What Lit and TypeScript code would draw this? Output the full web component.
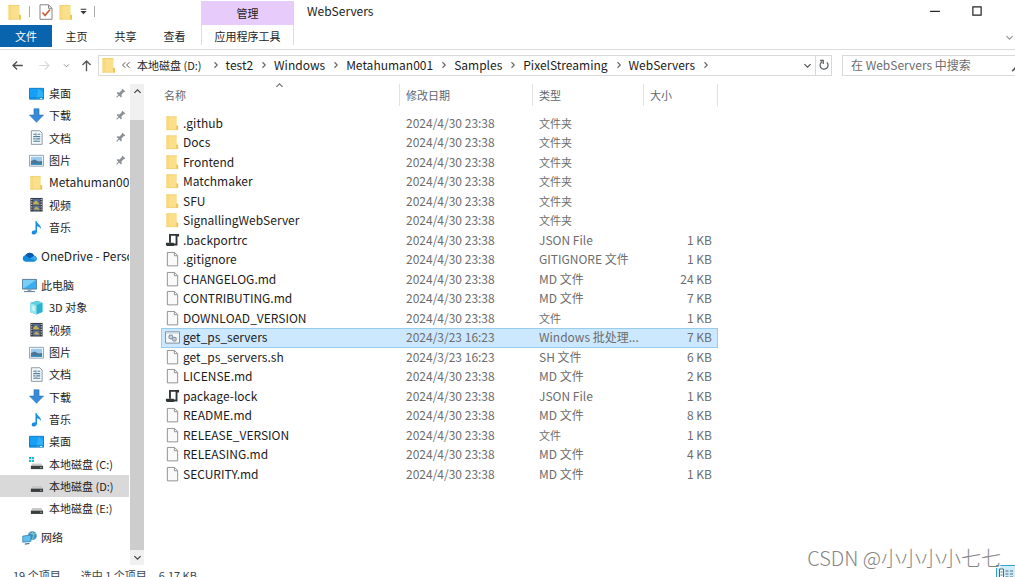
import { LitElement, html, css, svg, nothing, TemplateResult } from "lit";
import { customElement, property, state } from "lit/decorators.js";
import { classMap } from "lit/directives/class-map.js";

const icons: Record<string, TemplateResult> = {
  folder: svg`<path d="M1.500 1h11v9.500l1.500.8V15.500h-12.500z" fill="#fbe08c"/><path d="M1.500 1h3v14.500h-3z" fill="#f7da80"/><path d="M12 10.500l2 .8v4.200h-2z" fill="#e9c65c"/><path d="M1.500 1.500h11M1.500 15.100h12.500" stroke="#edcb6b" stroke-width=".7"/>`,
  file: svg`<path d="M2.500 1h7.700l3.300 3.300V15.300h-11z" fill="#fafafa" stroke="#8d8d8d"/><path d="M10 1.200v3.300h3.300" fill="none" stroke="#8d8d8d"/>`,
  json: svg`<path d="M5.300 11V2.500h9.200M12.300 2.500v10.300H2.500" fill="none" stroke="#2f3437" stroke-width="2"/><path d="M1 11h8.500v3.300H2.500Q1 14.300 1 12.500z" fill="#2f3437"/><path d="M13 1.500h2v2.800h-2z" fill="#2f3437"/>`,
  batch: svg`<path d="M.5 2.500h15v12H.5z" fill="#f4f8fb" stroke="#7d8b98"/><path d="M1 3h14v1.500H1z" fill="#cbd8e2"/><circle cx="6.200" cy="8" r="2" fill="none" stroke="#8795a1" stroke-width="1.300"/><circle cx="10" cy="10.500" r="2" fill="none" stroke="#8795a1" stroke-width="1.300"/><path d="M6.200 5.300v5.400M3.500 8h5.400M10 7.800v5.400M7.300 10.500h5.400" stroke="#a6b2bc" stroke-width=".6"/>`,
  desktop: svg`<path d="M.5 2.500h15v11.500H.5z" fill="#16a0f5" stroke="#0d78be"/><path d="M10 3l5 4v6.500H8z" fill="#2fb0fb"/><path d="M1 12.500h14" stroke="#0b84d4"/><path d="M12 13.300h2" stroke="#fff"/>`,
  download: svg`<path d="M5.300.8h5.400v6.700h4.800L8 15.300.5 7.500h4.800z" fill="#368ad8" stroke="#286fb4" stroke-width=".6"/>`,
  document: svg`<path d="M2.500.8h9l2.500 2.500v12H2.500z" fill="#f7fafc" stroke="#8594a0"/><path d="M4.500 4.500h3M9 4.500h3M4.500 7h7.500M4.500 9.500h2M8 9.500h4M4.500 12h7.500" stroke="#527b99" stroke-width="1.200"/><path d="M7.500 3v4M7.500 8.500v4" stroke="#6fa2c2"/>`,
  picture: svg`<path d="M.5 2.500h15v11.500H.5z" fill="#fff" stroke="#8ba0b2"/><path d="M2 4h12v8.500H2z" fill="#9acaed"/><path d="M2 8.500l4-1.500 4 2 4-.5v4H2z" fill="#4e7694"/><path d="M2 11h12v1.500H2z" fill="#2e8cc2"/>`,
  video: svg`<path d="M1.500 1h13v14.500h-13z" fill="#343a42"/><path d="M4.500 2h7v6h-7z" fill="#4e6d9a"/><path d="M4.500 9h7v5.500h-7z" fill="#5873a1"/><path d="M4.500 6l3-2.500L11.500 8h-7zM5 13l3-3 3.500 3.500z" fill="#c5ae57"/><path d="M3 2v13M13 2v13" stroke="#e3e3df" stroke-width="1.200" stroke-dasharray="1.300 1.300"/>`,
  music: svg`<path d="M8 1c.4 3 5.200 3.800 4.700 8.500C11.500 7.500 10 6.800 8.600 6.600V12c0 2-1.500 3.500-3.300 3.500S2.500 14.300 3 13c.5-1.500 2.300-2.300 3.900-1.800V1z" fill="#198fe3"/>`,
  cloud: svg`<path d="M4 13.500a3.500 3.500 0 0 1-.5-6.900A5.300 5.300 0 0 1 13 7.200a3.200 3.200 0 0 1 0 6.300z" fill="#1488da"/><path d="M3.500 6.600A5.300 5.300 0 0 1 13 7.200L8.500 10z" fill="#0a5cae"/><path d="M13 7.200a3.200 3.200 0 0 1 2 5.300L8.500 10z" fill="#35a8ec"/>`,
  computer: svg`<path d="M.5 1.500h15v10.300H.5z" fill="#38aeee" stroke="#5c7e96"/><path d="M1 2h14L2 11H1z" fill="#7acff8"/><path d="M6 12h4v2H6z" fill="#8da4b3"/><path d="M2 14.500h12" stroke="#55758c"/>`,
  cube: svg`<path d="M1.500 3L9 .7l5.500 2.500v9.600L8 15.500 1.500 13z" fill="#28b3ce"/><path d="M1.500 3L8 5.300v10.200L1.500 13z" fill="#9be6ee"/><path d="M1.500 3L9 .7l5.500 2.500L8 5.300z" fill="#62d1e0"/><path d="M3.500 6L6 7v5l-2.500-1z" fill="#d4f5f7"/>`,
  system: svg`<path d="M0 1h2.300v2.300H0zM3 1h2.300v2.300H3zM0 4h2.300v2.300H0zM3 4h2.300v2.300H3z" fill="#18b5dd"/><path d="M3.500 8h9.500l2 3H2z" fill="#ccc"/><path d="M2 10.500h13V14H2z" fill="#3d4144"/><path d="M12 12.300h1.500" stroke="#8fdc8c"/>`,
  drive: svg`<path d="M3.500 7.500h9.500l2 3H2z" fill="#c9c9c9"/><path d="M2 10.300h13v3.500H2z" fill="#393d40"/><path d="M12 12h1.500" stroke="#9bd79a"/>`,
  network: svg`<circle cx="11" cy="6" r="4.700" fill="#3d91ba"/><path d="M8 3q3 2 7 1M11 1.500q3 4 0 9" stroke="#8fd3d9" fill="none"/><path d="M.8 6.500l8.700-1.300v7L.8 13z" fill="#60bdf0" stroke="#377fa9" stroke-width=".8"/><path d="M3 15l5-.8" stroke="#4d7d9b" stroke-width="1.300"/>`,
  check: svg`<path d="M2 .8h8.500L14 4.300V15.300H2z" fill="#fff" stroke="#858585"/><path d="M10.500.8v3.500H14" fill="none" stroke="#858585"/><path d="M4.500 8.500l2.500 3 5-6" fill="none" stroke="#cf5d38" stroke-width="1.700"/>`,
  pin: svg`<g transform="rotate(45 8 8)" fill="#8a9095"><path d="M5 1h6v1.500h-1V8l2.500 2v1.500h-9V10L6 8V2.500H5zM7.300 11h1.400v5H7.300z"/></g>`,
  back: svg`<path d="M14.500 8H2.500M7.500 3L2.500 8l5 5" fill="none" stroke="#4e5256" stroke-width="1.700"/>`,
  forward: svg`<path d="M1.500 8h12M8.500 3l5 5-5 5" fill="none" stroke="#d6d8da" stroke-width="1.500"/>`,
  up: svg`<path d="M8 15V2.500M3 7.500l5-5 5 5" fill="none" stroke="#55595c" stroke-width="1.700"/>`,
  down: svg`<path d="M2.500 5.500L8 11l5.500-5.500" fill="none" stroke="currentColor" stroke-width="2.200"/>`,
  caretUp: svg`<path d="M2.500 10.500L8 5l5.500 5.500" fill="none" stroke="currentColor" stroke-width="2.200"/>`,
  right: svg`<path d="M5 2.500L10.500 8 5 13.500" fill="none" stroke="#666" stroke-width="2.200"/>`,
  guillemet: svg`<path d="M7 3.500L2.500 8 7 12.500M13.500 3.500L9 8l4.500 4.500" fill="none" stroke="#555" stroke-width="1.600"/>`,
  refresh: svg`<path d="M11.800 4.500A5.300 5.300 0 1 1 5.500 3.700M2.800 2h4.200v4.500" fill="none" stroke="#5d6267" stroke-width="1.700"/>`,
  menu: svg`<path d="M3 4h10" stroke="#333" stroke-width="1.800"/><path d="M2.500 7h11L8 13z" fill="#333"/>`,
  minimize: svg`<path d="M1.500 8.500h13" stroke="#222" stroke-width="1.600"/>`,
  maximize: svg`<path d="M2.500 2.500h11v11h-11z" fill="none" stroke="#222" stroke-width="1.600"/>`,
  search: svg`<circle cx="10" cy="6" r="4" fill="none" stroke="#555" stroke-width="1.500"/><path d="M7 9l-5.500 6" stroke="#555" stroke-width="2"/>`,
  details: svg`<path d="M2.500 3h4v10h-4z" fill="#fff" stroke="#426d86"/><path d="M3.500 6h2M3.500 9h2M8.500 5h3M13 5h3M8.500 8h3M13 8h3M8.500 11h3M13 11h3" stroke="#426d86"/>`,
};

@customElement("ui-icon")
export class UiIcon extends LitElement {
  static styles = css`
    :host { display: inline-flex; flex: none; width: 16px; height: 16px; }
    .glyph { display: block; width: 100%; height: 100%; }
  `;
  @property() name = "file";
  render() {
    return html`<svg class="glyph" viewBox="0 0 16 16" aria-hidden="true">${icons[this.name]}</svg>`;
  }
}

type NavEntry = { label: string; icon: string; pinned?: boolean; current?: boolean };

const quickAccess: NavEntry[] = [
  { label: "桌面", icon: "desktop", pinned: true },
  { label: "下载", icon: "download", pinned: true },
  { label: "文档", icon: "document", pinned: true },
  { label: "图片", icon: "picture", pinned: true },
  { label: "Metahuman001", icon: "folder" },
  { label: "视频", icon: "video" },
  { label: "音乐", icon: "music" },
];
const thisPc: NavEntry[] = [
  { label: "3D 对象", icon: "cube" },
  { label: "视频", icon: "video" },
  { label: "图片", icon: "picture" },
  { label: "文档", icon: "document" },
  { label: "下载", icon: "download" },
  { label: "音乐", icon: "music" },
  { label: "桌面", icon: "desktop" },
  { label: "本地磁盘 (C:)", icon: "system" },
  { label: "本地磁盘 (D:)", icon: "drive", current: true },
  { label: "本地磁盘 (E:)", icon: "drive" },
];

const april = "2024/4/30 23:38";
const march = "2024/3/23 16:23";
const files: [string, string, string, string, string][] = [
  [".github", "folder", april, "文件夹", ""],
  ["Docs", "folder", april, "文件夹", ""],
  ["Frontend", "folder", april, "文件夹", ""],
  ["Matchmaker", "folder", april, "文件夹", ""],
  ["SFU", "folder", april, "文件夹", ""],
  ["SignallingWebServer", "folder", april, "文件夹", ""],
  [".backportrc", "json", april, "JSON File", "1 KB"],
  [".gitignore", "file", april, "GITIGNORE 文件", "1 KB"],
  ["CHANGELOG.md", "file", april, "MD 文件", "24 KB"],
  ["CONTRIBUTING.md", "file", april, "MD 文件", "7 KB"],
  ["DOWNLOAD_VERSION", "file", april, "文件", "1 KB"],
  ["get_ps_servers", "batch", march, "Windows 批处理...", "7 KB"],
  ["get_ps_servers.sh", "file", march, "SH 文件", "6 KB"],
  ["LICENSE.md", "file", april, "MD 文件", "2 KB"],
  ["package-lock", "json", april, "JSON File", "1 KB"],
  ["README.md", "file", april, "MD 文件", "8 KB"],
  ["RELEASE_VERSION", "file", april, "文件", "1 KB"],
  ["RELEASING.md", "file", april, "MD 文件", "4 KB"],
  ["SECURITY.md", "file", april, "MD 文件", "1 KB"],
];
const crumbs = ["test2", "Windows", "Metahuman001", "Samples", "PixelStreaming", "WebServers"];

@customElement("app-root")
export class AppRoot extends LitElement {
  @state() private selected = "get_ps_servers";

  static styles = css`
    :host {
      display: flex; flex-direction: column; height: 100vh; overflow: hidden; position: relative;
      background: #fff; color: #1c1c1c;
      font: 12px/16px "Noto Sans CJK SC", "Noto Sans", sans-serif;
    }
    button, input { font: inherit; color: inherit; border: 0; padding: 0; margin: 0; background: none; }
    button { display: flex; align-items: center; }
    a { color: inherit; text-decoration: none; }
    .han { font-size: 11px; }

    .titlebar { display: flex; flex: none; height: 25px; }
    .quick { display: flex; align-items: center; box-sizing: border-box; width: 201px; height: 23px; padding: 0 7px; }
    .quick .rule { width: 1px; height: 11px; background: #aaa; margin: 0 8px 0 6px; }
    .tiny { width: 9px; height: 9px; }
    .quick .tiny { margin-left: 5px; }
    .quick .open { margin-left: 4px; }
    .context { width: 93px; margin-top: 1px; background: #e7cbfb; display: flex; align-items: center; justify-content: center; }
    .title { font-size: 12px; font-weight: 400; line-height: 22px; margin: 0 auto 0 13px; }
    .window-buttons { display: flex; align-items: center; gap: 30px; height: 22px; margin-right: 32px; }
    .window-buttons ui-icon { width: 12px; height: 12px; }

    .ribbon { display: flex; flex: none; align-items: flex-start; height: 24px; border-bottom: 1px solid #dcdcdc; }
    .tab { justify-content: center; height: 22px; width: 49px; }
    .tab.primary { width: 52px; background: #0a64ad; color: #fff; }
    .tab.tools { width: 93px; box-sizing: border-box; height: 20px; padding-top: 2px; margin-left: 2px; border: solid #dcdcdc; border-width: 0 1px; }
    .ribbon .expand { margin: 8px 1px 0 auto; color: #999; }

    .navigation { display: flex; flex: none; align-items: center; padding: 4px 0 5px; height: 22px; }
    .history { display: flex; align-items: center; box-sizing: border-box; width: 98px; padding-left: 11px; }
    .history ui-icon { width: 13px; height: 13px; }
    .history .next { margin-left: 14px; }
    .history .recent { margin: 0 10px 0 12px; color: #888; }
    .history .recent ui-icon { width: 7px; height: 7px; }
    .address { display: flex; flex: 1; align-items: center; box-sizing: border-box; height: 21px; min-width: 0; border: 1px solid #d9d9d9; padding-left: 2px; }
    .address .start { width: 10px; height: 10px; margin: 0 6px 0 4px; }
    .crumb { display: flex; align-items: center; }
    .crumb ui-icon { width: 8px; height: 8px; margin: 0 6px 0 7px; }
    .crumb .han { padding-right: 3px; }
    .address .list { margin-left: auto; color: #555; padding-right: 3px; }
    .address .reload { width: 16px; height: 19px; border-left: 1px solid #d9d9d9; justify-content: center; }
    .address .reload ui-icon { width: 12px; height: 12px; }
    .search { display: flex; align-items: center; box-sizing: border-box; width: 183px; height: 21px; margin: 0 -10px 0 10px; border: 1px solid #d9d9d9; padding-left: 8px; }
    .search input { flex: 1; min-width: 0; outline: 0; }
    .search input::placeholder { color: #6d6d6d; opacity: 1; }
    .search ui-icon { width: 13px; height: 13px; }

    .body { display: flex; flex: 1; min-height: 0; }
    .sidebar { width: 129px; overflow: hidden; padding-top: 1px; }
    .group { margin: 0 0 7px; }
    .entry { display: flex; align-items: center; height: 22px; gap: 5px; padding-left: 29px; white-space: nowrap; }
    .entry:nth-child(3n) { height: 23px; }
    .entry.root { padding-left: 22px; gap: 4px; }
    .entry.current { background: #d9d9d9; }
    .entry ui-icon { width: 15px; height: 15px; }
    .entry .pin { width: 11px; height: 11px; margin: 0 3px 0 auto; }

    .scrollbar { display: flex; flex-direction: column; width: 14px; margin: 3px 0 3px 1px; background: #f0f0f0; color: #444; }
    .scrollbar button { justify-content: center; height: 15px; }
    .thumb { flex: 1; margin-top: 21px; background: #cdcdcd; }

    .content { flex: 1; min-width: 0; padding: 3px 0 0 17px; }
    .files { table-layout: fixed; width: 557px; border-collapse: collapse; }
    .c-name { width: 239px; }
    .c-date { width: 133px; }
    .c-type { width: 111px; }
    th { position: relative; padding: 0 0 8px; font-weight: 400; }
    th button { box-sizing: border-box; width: 100%; height: 22px; padding-left: 6px; border-right: 1px solid #e2e2e2; color: #5d6670; }
    th:first-child button { padding-left: 3px; }
    .sort { position: absolute; left: 114px; top: -3px; color: #777; }
    td { padding: 0 0 0 6px; color: #6d6d6d; white-space: nowrap; overflow: hidden; vertical-align: top; }
    .row { height: 19px; line-height: 18px; }
    .row:nth-child(even) { height: 20px; }
    .row.selected { background: #cce8ff; outline: 1px solid #99cdee; outline-offset: -1px; }
    .row td:first-child { padding-left: 4px; }
    .row td:last-child { text-align: right; padding-right: 6px; }
    .name { display: flex; align-items: center; gap: 3px; color: #1c1c1c; }
    .name ui-icon { width: 15px; height: 16px; }

    .status { display: flex; flex: none; height: 9px; overflow: hidden; padding-left: 13px; color: #3c4654; line-height: 14px; }
    .status .count { margin-right: 20px; }
    .status .size { margin-left: 12px; }
    .view { position: absolute; right: 0; bottom: 0; width: 19px; height: 12px; box-sizing: border-box; overflow: hidden; background: #d1ecf9; border: solid #36a0cf; border-width: 1px 0 0 1px; align-items: flex-start; }
    .mark { position: absolute; right: 14px; bottom: 5px; color: #858585; font-size: 20px; line-height: 28px; font-weight: 300; text-shadow: 1px 1px 0 #fff; }
  `;

  private navItem(item: NavEntry, root = false) {
    const latin = /^[\x00-\x7f]+$/.test(item.label);
    return html`<a href="#" class=${classMap({ entry: true, root, current: !!item.current, han: !latin })}
      ><ui-icon name=${item.icon}></ui-icon>${item.label}${item.pinned ? html`<ui-icon class="pin" name="pin"></ui-icon>` : nothing}</a>`;
  }

  render() {
    return html`
      <header class="titlebar">
        <div class="quick">
          <ui-icon name="folder"></ui-icon><span class="rule"></span>
          <ui-icon name="check"></ui-icon><ui-icon class="open" name="folder"></ui-icon>
          <ui-icon class="tiny" name="menu"></ui-icon><span class="rule"></span>
        </div>
        <div class="context han">管理</div>
        <h1 class="title">WebServers</h1>
        <div class="window-buttons">
          <button aria-label="最小化"><ui-icon name="minimize"></ui-icon></button>
          <button aria-label="最大化"><ui-icon name="maximize"></ui-icon></button>
        </div>
      </header>
      <nav class="ribbon han">
        <button class="tab primary">文件</button>
        <button class="tab">主页</button>
        <button class="tab">共享</button>
        <button class="tab">查看</button>
        <button class="tab tools">应用程序工具</button>
        <button class="expand" aria-label="展开功能区"><ui-icon class="tiny" name="down"></ui-icon></button>
      </nav>
      <div class="navigation">
        <div class="history">
          <button aria-label="后退"><ui-icon name="back"></ui-icon></button>
          <button class="next" aria-label="前进"><ui-icon name="forward"></ui-icon></button>
          <button class="recent" aria-label="最近"><ui-icon name="down"></ui-icon></button>
          <button aria-label="向上"><ui-icon name="up"></ui-icon></button>
        </div>
        <div class="address">
          <ui-icon name="folder"></ui-icon><ui-icon class="start" name="guillemet"></ui-icon>
          <span class="crumb"><a href="#" class="han">本地磁盘 (D:)</a><ui-icon name="right"></ui-icon></span>
          ${crumbs.map((c) => html`<span class="crumb"><a href="#">${c}</a><ui-icon name="right"></ui-icon></span>`)}
          <button class="list" aria-label="以前的位置"><ui-icon class="tiny" name="down"></ui-icon></button>
          <button class="reload" aria-label="刷新"><ui-icon name="refresh"></ui-icon></button>
        </div>
        <label class="search">
          <input type="text" aria-label="搜索" placeholder="在 WebServers 中搜索" />
          <ui-icon name="search"></ui-icon>
        </label>
      </div>
      <div class="body">
        <nav class="sidebar">
          <div class="group">${quickAccess.map((i) => this.navItem(i))}</div>
          <div class="group">${this.navItem({ label: "OneDrive - Personal", icon: "cloud" }, true)}</div>
          <div class="group">
            ${this.navItem({ label: "此电脑", icon: "computer" }, true)}${thisPc.map((i) => this.navItem(i))}
          </div>
          <div class="group">${this.navItem({ label: "网络", icon: "network" }, true)}</div>
        </nav>
        <div class="scrollbar">
          <button aria-label="向上滚动"><ui-icon class="tiny" name="caretUp"></ui-icon></button>
          <div class="thumb"></div>
          <button aria-label="向下滚动"><ui-icon class="tiny" name="down"></ui-icon></button>
        </div>
        <main class="content">
          <table class="files">
            <colgroup><col class="c-name" /><col class="c-date" /><col class="c-type" /><col /></colgroup>
            <thead>
              <tr class="han">
                <th><button>名称</button><ui-icon class="sort tiny" name="caretUp"></ui-icon></th>
                <th><button>修改日期</button></th>
                <th><button>类型</button></th>
                <th><button>大小</button></th>
              </tr>
            </thead>
            <tbody>
              ${files.map(([name, icon, date, type, size]) => html`
                <tr class=${classMap({ row: true, selected: name === this.selected })} @click=${() => (this.selected = name)}>
                  <td><span class="name"><ui-icon name=${icon}></ui-icon>${name}</span></td>
                  <td>${date}</td>
                  <td class=${classMap({ han: type.startsWith("文件") })}>${type}</td>
                  <td>${size}</td>
                </tr>`)}
            </tbody>
          </table>
        </main>
      </div>
      <footer class="status han">
        <span class="count">19 个项目</span><span>选中 1 个项目</span><span class="size">6.17 KB</span>
      </footer>
      <button class="view" aria-label="详细信息"><ui-icon name="details"></ui-icon></button>
      <div class="mark">CSDN @小小小小七七</div>
    `;
  }
}
